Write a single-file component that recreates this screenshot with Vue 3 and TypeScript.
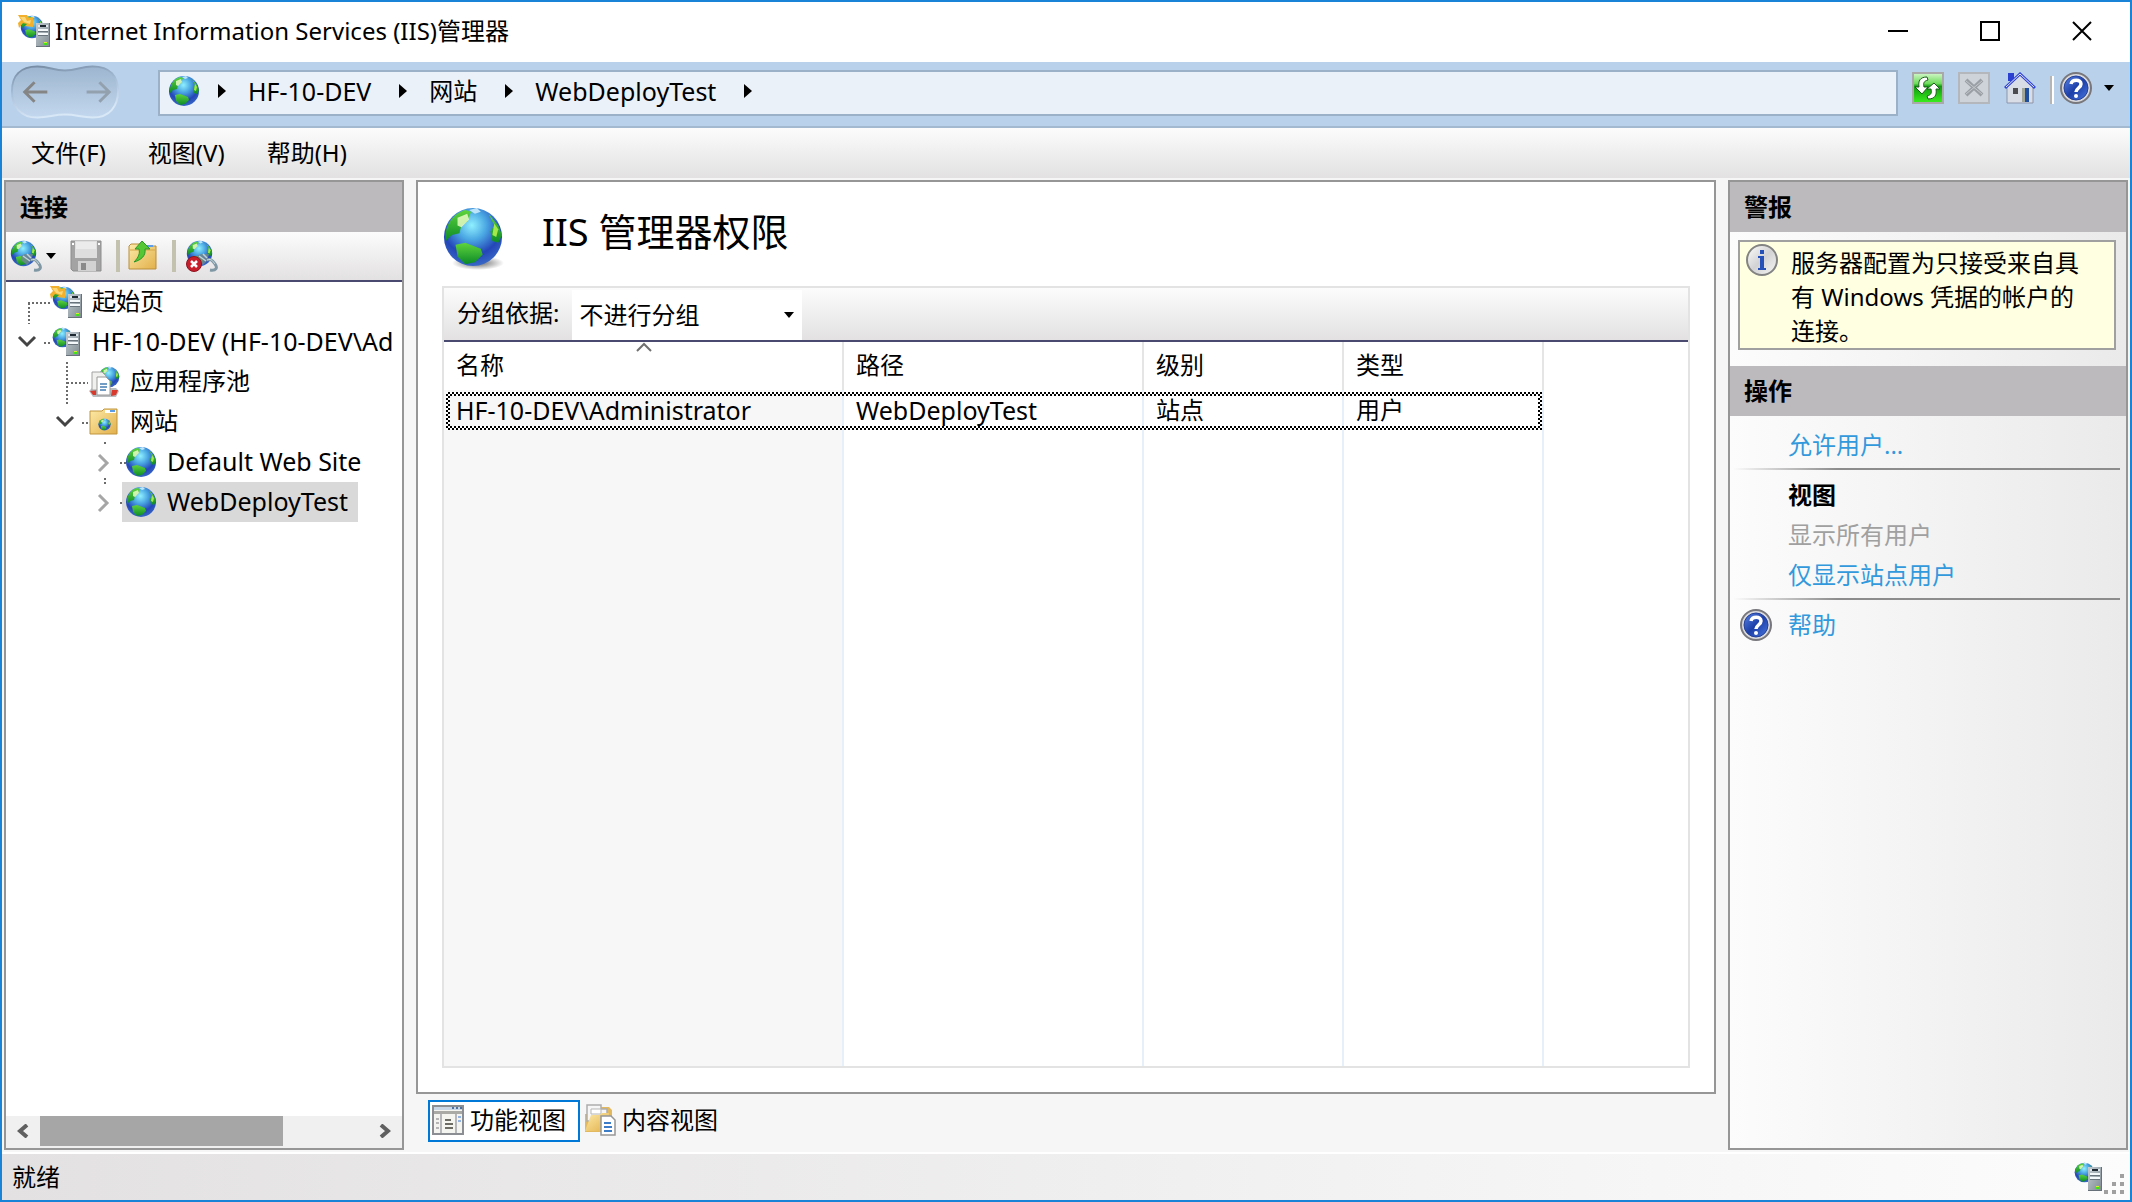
<script setup lang="ts">
import { ref } from 'vue'

interface TreeNode {
  id: string
  label: string
  icon: string
  level: number
  chevron?: { d: string; tone: string }
  dots: string[]
}

const menus = ['文件(F)', '视图(V)', '帮助(H)']
const crumbs = [
  { text: 'HF-10-DEV', latin: true },
  { text: '网站', latin: false },
  { text: 'WebDeployTest', latin: true },
]

const nodes: TreeNode[] = [
  { id: 'start', label: '起始页', icon: 'i-start', level: 0, dots: ['M22 21H44', 'M23 21V42'] },
  { id: 'server', label: 'HF-10-DEV (HF-10-DEV\\Ad', icon: 'i-server', level: 0, chevron: { d: 'M13 15l8 8 8-8', tone: '#444' }, dots: ['M38 21H44'] },
  { id: 'pools', label: '应用程序池', icon: 'i-pool', level: 1, dots: ['M61 0V40', 'M61 21H82'] },
  { id: 'sites', label: '网站', icon: 'i-sites', level: 1, chevron: { d: 'M51 15l8 8 8-8', tone: '#444' }, dots: ['M61 0V4', 'M76 21H82'] },
  { id: 'default', label: 'Default Web Site', icon: 'i-globe', level: 2, chevron: { d: 'M93 13l8 8-8 8', tone: '#a6a6a6' }, dots: ['M99 0V4', 'M99 36V40', 'M114 21H120'] },
  { id: 'deploy', label: 'WebDeployTest', icon: 'i-globe', level: 2, chevron: { d: 'M93 13l8 8-8 8', tone: '#a6a6a6' }, dots: ['M99 0V4', 'M114 21H120'] },
]
const selected = ref('deploy')

const columns = ['名称', '路径', '级别', '类型']
const rows = [['HF-10-DEV\\Administrator', 'WebDeployTest', '站点', '用户']]
const grouping = ref('none')
const view = ref('features')
const isLatin = (s: string) => /^[\x20-\x7e]+$/.test(s)
</script>

<template>
  <svg class="defs" aria-hidden="true">
    <defs>
      <radialGradient id="g-sea" cx="0.48" cy="0.3" r="0.72">
        <stop offset="0" stop-color="#8ff0ff" />
        <stop offset="0.35" stop-color="#4aa6e2" />
        <stop offset="0.7" stop-color="#2446b8" />
        <stop offset="1" stop-color="#3a6cc8" />
      </radialGradient>
      <linearGradient id="g-land" x1="0" y1="0" x2="0" y2="1">
        <stop offset="0" stop-color="#5fd43c" />
        <stop offset="1" stop-color="#0c8a28" />
      </linearGradient>
      <linearGradient id="g-case" x1="0" y1="0" x2="1" y2="1">
        <stop offset="0" stop-color="#c3ccd2" />
        <stop offset="1" stop-color="#7d8890" />
      </linearGradient>
      <linearGradient id="g-folder" x1="0" y1="0" x2="1" y2="1">
        <stop offset="0" stop-color="#fdeaa8" />
        <stop offset="1" stop-color="#e2b04a" />
      </linearGradient>
      <linearGradient id="g-refresh" x1="0" y1="0" x2="0" y2="1">
        <stop offset="0" stop-color="#d4f7cc" />
        <stop offset="0.35" stop-color="#6edc5c" />
        <stop offset="0.45" stop-color="#0f9a10" />
        <stop offset="1" stop-color="#3cf020" />
      </linearGradient>
      <linearGradient id="g-help" x1="0" y1="0" x2="1" y2="1">
        <stop offset="0" stop-color="#5b85e6" />
        <stop offset="0.5" stop-color="#1c3fa8" />
        <stop offset="1" stop-color="#4a78e0" />
      </linearGradient>
      <linearGradient id="g-info" x1="0" y1="0" x2="1" y2="1">
        <stop offset="0" stop-color="#ffffff" />
        <stop offset="0.5" stop-color="#d2d2d4" />
        <stop offset="1" stop-color="#f8f8f8" />
      </linearGradient>
      <linearGradient id="g-nav" x1="0" y1="0" x2="0" y2="1">
        <stop offset="0" stop-color="#9db5cf" />
        <stop offset="1" stop-color="#c3d8ee" />
      </linearGradient>
      <linearGradient id="g-navline" x1="0" y1="0" x2="0.3" y2="1">
        <stop offset="0" stop-color="#71869f" />
        <stop offset="0.5" stop-color="#a9c0da" />
        <stop offset="1" stop-color="#d9e8f7" />
      </linearGradient>
      <radialGradient id="g-shade">
        <stop offset="0" stop-color="#000" stop-opacity="0.6" />
        <stop offset="1" stop-color="#000" stop-opacity="0" />
      </radialGradient>
      <symbol id="i-globe" viewBox="0 0 32 32">
        <circle cx="16" cy="16" r="15" fill="url(#g-sea)" />
        <path d="M2 18C1 11 5 4 12 2l3 1-2 5-3 2-1 4-4 1z" fill="url(#g-land)" />
        <path d="M8 6l5-2 1 3-4 4-2-1z" fill="#e9fbc4" opacity="0.85" />
        <path d="M24 4l5 6 2 5-2 4-3-1-1-5 2-3z" fill="url(#g-land)" />
        <path d="M27 9l2 3-1 4-2-1z" fill="#a4e84c" />
        <path d="M7 20l5-1 8 3 1 3-4 4-5 1-4-4z" fill="url(#g-land)" />
        <path d="M14 2l4-1 2 2-3 1z" fill="#d8f4ff" opacity="0.8" />
      </symbol>
      <symbol id="i-case" viewBox="0 0 14 24">
        <path d="M0 0H14V24H0z" fill="url(#g-case)" />
        <path d="M13 0H14V24H0V23H13z" fill="#66717a" />
        <path d="M2 2H12V4H2z" fill="#dfe7ec" />
        <path d="M4 2h6v2H4z" fill="#1d2830" />
        <path d="M2 6H12V8H2zM2 10H12V12H2z" fill="#f4f8fa" />
        <path d="M2 8H12V9H2zM2 12H12V13H2z" fill="#68737c" />
        <path d="M8 19h4v3H8z" fill="#44e01a" />
        <path d="M8 19h3v1H8z" fill="#d8ee30" />
      </symbol>
      <symbol id="i-server" viewBox="0 0 32 32">
        <use href="#i-globe" x="2" y="1" width="21" height="21" />
        <use href="#i-case" x="16" y="4" width="14" height="28" preserveAspectRatio="none" />
      </symbol>
      <symbol id="i-start" viewBox="0 0 32 32">
        <use href="#i-globe" x="2" y="0" width="24" height="24" />
        <path d="M0 0H9l2 3 4-1v10l-8-1 2-2-4-1-4 5-1-5 3-3z" fill="#f2b02c" />
        <path d="M2 2h5l2 4 4-1-1 4-6-2z" fill="#fbd877" />
        <use href="#i-case" x="18" y="8" width="14" height="24" preserveAspectRatio="none" />
      </symbol>
      <symbol id="i-plug" viewBox="0 0 32 32">
        <use href="#i-globe" x="0" y="0" width="27" height="27" />
        <path d="M11 16l4-2 8 0-2 7-4 4-5-4z" fill="#6f8790" opacity="0.85" />
        <path d="M13 16l7 5M17 14l4 4" stroke="#c2d2d8" stroke-width="1.500" />
        <path d="M21 20c5-2 6 2 8 4 3 4 1 7-5 6" fill="none" stroke="#7f98a4" stroke-width="3" />
        <path d="M21 20c5-2 6 2 8 4" fill="none" stroke="#cbdde4" stroke-width="1" />
      </symbol>
      <symbol id="i-unplug" viewBox="0 0 32 32">
        <use href="#i-plug" width="32" height="32" />
        <circle cx="8" cy="24" r="7.500" fill="#c81e2c" stroke="#8f1420" />
        <path d="M5 21l6 6M11 21l-6 6" stroke="#fff" stroke-width="2.500" />
      </symbol>
      <symbol id="i-save" viewBox="0 0 32 32">
        <path d="M1 1H31V31H3l-2-2z" fill="#a3a3a3" stroke="#8e8e8e" />
        <path d="M5 1H27V18H5z" fill="#dedede" />
        <path d="M6 2H26V9H6z" fill="#ebebeb" />
        <path d="M8 21H26V31H8z" fill="#d2d2d2" />
        <path d="M11 23h5v7h-5z" fill="#8a8a8a" />
        <path d="M2 3h2v2H2zM28 3h2v2h-2z" fill="#fff" />
      </symbol>
      <symbol id="i-up" viewBox="0 0 32 32">
        <path d="M3 6l2-2h13l2 2h10v23H3z" fill="url(#g-folder)" stroke="#b98e3a" />
        <path d="M4 10H29" stroke="#d4a548" />
        <path d="M21 5h6v2h-6z" fill="#5f9de6" />
        <path d="M16 1l8 8h-5c1 7-4 11-11 13 5-5 6-9 5-13H9z" fill="#55c634" stroke="#2c962a" />
      </symbol>
      <symbol id="i-pool" viewBox="0 0 32 32">
        <use href="#i-globe" x="10" y="0" width="22" height="22" />
        <path d="M1 25l3-3h24l3 3-3 6H5z" fill="#b9bdc0" />
        <path d="M2 25l6-1v5H5zM24 24l6 0-2 5-5 1z" fill="#d8392c" />
        <path d="M4 6H14l4 4V24H4z" fill="#f0f0ee" stroke="#a2a2a2" />
        <path d="M9 11H18l4 4V29H9z" fill="#fff" stroke="#999" />
        <path d="M12 18h7M12 21h7M12 24h6" stroke="#477db4" stroke-width="1.500" />
      </symbol>
      <symbol id="i-sites" viewBox="0 0 32 32">
        <path d="M2 5h12l2-2h13v25H2z" fill="url(#g-folder)" stroke="#c0953e" />
        <path d="M17 4h11v3H17z" fill="#fff" />
        <path d="M22 4h5v2h-5z" fill="#5c9ce4" />
        <use href="#i-globe" x="10" y="12" width="13" height="13" />
      </symbol>
      <symbol id="i-help" viewBox="0 0 32 32">
        <circle cx="16" cy="16" r="15" fill="#d9d9dc" stroke="#77777c" stroke-width="2" />
        <circle cx="16" cy="16" r="12" fill="url(#g-help)" stroke="#24409a" />
        <path d="M11 12c1-5 10-5 10 0 0 4-5 4-5 8" fill="none" stroke="#fff" stroke-width="3.500" />
        <circle cx="16" cy="24" r="2" fill="#fff" />
      </symbol>
      <symbol id="i-info" viewBox="0 0 32 32">
        <circle cx="16" cy="16" r="15" fill="url(#g-info)" stroke="#838383" stroke-width="2" />
        <path d="M14 6h4v4h-4zM12 12h6v12h2v2h-8v-2h2v-10h-2z" fill="#2450b8" />
      </symbol>
      <symbol id="i-features" viewBox="0 0 32 32">
        <path d="M1 2H31V30H1z" fill="#f4f4f0" stroke="#8b8f94" stroke-width="2" />
        <path d="M2 3H30V6H2z" fill="#c9d6e6" />
        <path d="M20 3h2v2h-2zM24 3h2v2h-2zM28 3h2v2h-2z" fill="#51719e" />
        <path d="M2 7H30V10H2z" fill="#a9a9a6" />
        <path d="M9 10V29M24 10V29" stroke="#a0a4a8" stroke-width="1.500" />
        <path d="M13 16h6M13 20h8M13 24h8" stroke="#6d6d66" stroke-width="2" />
        <path d="M4 15h3M4 19h3M4 24h3" stroke="#b5b5b5" stroke-width="2" />
        <path d="M26 13h3M26 17h3" stroke="#93b3e0" stroke-width="2" />
      </symbol>
      <symbol id="i-content" viewBox="0 0 32 32">
        <path d="M13 3h12l3 3v22H1V10h6z" fill="#e2b95e" />
        <path d="M3 1h14v4h6v12H3z" fill="#f6f6f6" stroke="#adadad" stroke-width="1.500" />
        <path d="M7 5h10v5H7z" fill="#fff" stroke="#b5b5b5" />
        <path d="M7 11h8l3-2h7v18H1z" fill="url(#g-folder)" />
        <path d="M17 12h10l4 4v15H17z" fill="#fff" stroke="#979797" stroke-width="1.500" />
        <path d="M20 19h7M20 23h8M20 27h8" stroke="#3d7dc8" stroke-width="2" />
      </symbol>
    </defs>
  </svg>

  <div class="window">
    <header class="titlebar">
      <svg class="icon"><use href="#i-start" /></svg>
      <h1>Internet Information Services (IIS)管理器</h1>
      <div class="caption">
        <button aria-label="最小化"><svg viewBox="0 0 20 20"><path d="M0 10H20" /></svg></button>
        <button aria-label="最大化"><svg viewBox="0 0 20 20"><path d="M1 1H19V19H1z" /></svg></button>
        <button aria-label="关闭"><svg viewBox="0 0 20 20"><path d="M1 1L19 19M19 1L1 19" /></svg></button>
      </div>
    </header>

    <nav class="address">
      <svg class="travel" viewBox="0 0 112 56">
        <path d="M28 2C40 2 44 6 56 6S72 2 84 2C102 2 110 12 110 27S102 54 84 54C72 54 68 51 56 51S40 54 28 54C10 54 2 42 2 27S10 2 28 2z" fill="url(#g-nav)" stroke="url(#g-navline)" stroke-width="2" />
        <path d="M38 28H15M25 18L15 28l10 10" fill="none" stroke="#858585" stroke-width="3" />
        <path d="M78 28h23M91 18l10 10-10 10" fill="none" stroke="#93a0ae" stroke-width="3" />
      </svg>
      <div class="path">
        <svg class="icon"><use href="#i-globe" /></svg>
        <svg class="arrow" viewBox="0 0 8 14"><path d="M0 0L8 7 0 14z" /></svg>
        <template v-for="c in crumbs" :key="c.text">
          <button :class="{ latin: c.latin }">{{ c.text }}</button>
          <svg class="arrow" viewBox="0 0 8 14"><path d="M0 0L8 7 0 14z" /></svg>
        </template>
      </div>
      <div class="tools">
        <button aria-label="刷新">
          <svg class="icon" viewBox="0 0 32 32">
            <path d="M1 1H31V31H1z" fill="url(#g-refresh)" stroke="#a9a9a9" stroke-width="2" />
            <path d="M15 5c-7 0-9 4-8 10H3l7 7 6-7h-4c-1-4 0-6 4-7z" fill="#fff" stroke="#1c5c1c" />
            <path d="M16 27c7 0 9-4 8-10h4l-6-6-7 6h4c1 4 0 6-4 7z" fill="#fff" stroke="#1c5c1c" />
          </svg>
        </button>
        <button aria-label="停止" disabled>
          <svg class="icon" viewBox="0 0 32 32">
            <path d="M1 1H31V31H1z" fill="#cdd3d9" stroke="#b4b8bd" stroke-width="2" />
            <path d="M8 8l16 15M24 8L8 23" stroke="#9a9fa5" stroke-width="4" />
            <path d="M8 9l16 13M24 9L8 22" stroke="#c3c7cc" stroke-width="1" />
          </svg>
        </button>
        <button aria-label="主页">
          <svg class="icon" viewBox="0 0 32 32">
            <path d="M4 1h6v8H4z" fill="#2b3fd0" />
            <path d="M3 15L16 3l13 12v16H3z" fill="#d9dde6" stroke="#8d95ab" />
            <path d="M9 16h5v6H9z" fill="#4c4c50" />
            <path d="M18 16h7v14h-7z" fill="#1e4e9c" />
            <path d="M18 16h3v14h-3z" fill="#a3a79a" />
            <path d="M1 16L16 2l15 14" fill="none" stroke="#3346d2" stroke-width="3" />
            <path d="M2 15L16 2l14 13" fill="none" stroke="#dfe4ff" stroke-width="1" />
          </svg>
        </button>
        <i class="bar"></i>
        <button class="help" aria-label="帮助">
          <svg class="icon"><use href="#i-help" /></svg>
          <svg class="caret" viewBox="0 0 10 6"><path d="M0 0H10L5 6z" /></svg>
        </button>
      </div>
    </nav>

    <div class="menubar">
      <button v-for="m in menus" :key="m">{{ m }}</button>
    </div>

    <main class="body">
      <aside class="panel left">
        <h2>连接</h2>
        <div class="toolbar">
          <button class="connect" aria-label="连接">
            <svg class="icon"><use href="#i-plug" /></svg>
            <svg class="caret" viewBox="0 0 10 6"><path d="M0 0H10L5 6z" /></svg>
          </button>
          <button aria-label="保存" disabled><svg class="icon"><use href="#i-save" /></svg></button>
          <i class="bar"></i>
          <button aria-label="上移"><svg class="icon"><use href="#i-up" /></svg></button>
          <i class="bar wide"></i>
          <button aria-label="断开"><svg class="icon"><use href="#i-unplug" /></svg></button>
        </div>
        <ul class="tree">
          <li v-for="n in nodes" :key="n.id">
            <svg :class="['gutter', 'level-' + n.level]">
              <path v-for="d in n.dots" :key="d" :d="d" class="dots" />
              <path v-if="n.chevron" :d="n.chevron.d" fill="none" :stroke="n.chevron.tone" stroke-width="3" />
            </svg>
            <button :class="{ selected: selected === n.id, latin: isLatin(n.label) }" @click="selected = n.id">
              <svg class="icon"><use :href="'#' + n.icon" /></svg>
              <span>{{ n.label }}</span>
            </button>
          </li>
        </ul>
        <div class="scroll">
          <button aria-label="向左"><svg viewBox="0 0 12 14"><path d="M10 1L3 7l7 6" /></svg></button>
          <div class="track"><div class="thumb"></div></div>
          <button aria-label="向右"><svg viewBox="0 0 12 14"><path d="M2 1l7 6-7 6" /></svg></button>
        </div>
      </aside>

      <section class="centre">
        <div class="panel page">
          <div class="heading">
            <svg viewBox="0 0 64 64">
              <ellipse cx="36" cy="57" rx="26" ry="7" fill="url(#g-shade)" />
              <use href="#i-globe" x="0" y="0" width="62" height="62" />
            </svg>
            <h2>IIS 管理器权限</h2>
          </div>
          <div class="list">
            <div class="group">
              <label for="grouping">分组依据:</label>
              <div class="combo">
                <select id="grouping" v-model="grouping">
                  <option value="none">不进行分组</option>
                  <option value="type">类型</option>
                </select>
                <svg class="caret" viewBox="0 0 10 6"><path d="M0 0H10L5 6z" /></svg>
              </div>
            </div>
            <div class="grid">
              <table>
                <colgroup><col class="c1" /><col class="c2" /><col class="c3" /><col class="c3" /><col /></colgroup>
                <thead>
                  <tr>
                    <th v-for="(c, i) in columns" :key="c">
                      {{ c }}
                      <svg v-if="i === 0" class="sort" viewBox="0 0 16 10"><path d="M1 9l7-7 7 7" /></svg>
                    </th>
                    <th></th>
                  </tr>
                </thead>
                <tbody>
                  <tr v-for="r in rows" :key="r[0]" class="focused">
                    <td v-for="c in r" :key="c" :class="{ latin: isLatin(c) }">{{ c }}</td>
                    <td></td>
                  </tr>
                  <tr class="rest"><td v-for="n in 5" :key="n"></td></tr>
                </tbody>
              </table>
            </div>
          </div>
        </div>
        <div class="tabs">
          <button :class="{ on: view === 'features' }" @click="view = 'features'">
            <svg class="icon"><use href="#i-features" /></svg>功能视图
          </button>
          <button :class="{ on: view === 'content' }" @click="view = 'content'">
            <svg class="icon"><use href="#i-content" /></svg>内容视图
          </button>
        </div>
      </section>

      <aside class="panel right">
        <h2>警报</h2>
        <div class="alert">
          <svg class="icon"><use href="#i-info" /></svg>
          <p>服务器配置为只接受来自具有 Windows 凭据的帐户的连接。</p>
        </div>
        <h2>操作</h2>
        <div class="actions">
          <div class="set"><a href="#">允许用户...</a></div>
          <div class="set">
            <h3>视图</h3>
            <span class="off">显示所有用户</span>
            <a href="#">仅显示站点用户</a>
          </div>
          <div class="set">
            <a href="#" class="with-icon"><svg class="icon"><use href="#i-help" /></svg>帮助</a>
          </div>
        </div>
      </aside>
    </main>

    <footer class="status">
      <span>就绪</span>
      <svg class="icon"><use href="#i-server" /></svg>
      <svg class="grip" viewBox="0 0 20 20">
        <path d="M16 0h4v4h-4zM8 8h4v4H8zM16 8h4v4h-4zM0 16h4v4H0zM8 16h4v4H8zM16 16h4v4h-4z" />
      </svg>
    </footer>
  </div>
</template>

<style>
body {
  margin: 0;
}
</style>

<style scoped>
*,
*::after {
  box-sizing: border-box;
}
.defs {
  position: absolute;
  width: 0;
  height: 0;
}
.window {
  display: flex;
  flex-direction: column;
  height: 100vh;
  border: 2px solid #1883d7;
  background: #f6f6f6;
  color: #000;
  font-family: 'Noto Sans', 'Noto Sans CJK SC', sans-serif;
  font-size: 24px;
  line-height: 34px;
}
.latin {
  font-size: 25px;
}
button {
  display: flex;
  align-items: center;
  margin: 0;
  padding: 0;
  border: 0;
  background: none;
  color: inherit;
  font-family: inherit;
  font-size: 24px;
  line-height: 34px;
  white-space: nowrap;
}
button.latin {
  font-size: 25px;
}
svg {
  display: block;
  flex: none;
}
.icon {
  width: 32px;
  height: 32px;
}
.caret {
  width: 10px;
  height: 6px;
}
h1,
h2,
h3,
p {
  margin: 0;
  font-weight: 400;
}

.titlebar {
  display: flex;
  align-items: center;
  height: 60px;
  padding: 0 2px 2px 16px;
  background: #fff;
}
.titlebar h1 {
  flex: 1;
  padding-left: 5px;
  font-size: 24px;
}
.caption {
  display: flex;
}
.caption button {
  width: 92px;
  height: 58px;
  justify-content: center;
}
.caption svg {
  width: 20px;
  height: 20px;
}
.caption path {
  fill: none;
  stroke: #000;
  stroke-width: 2;
}

.address {
  display: flex;
  height: 66px;
  padding: 2px 16px 0 8px;
  border-bottom: 2px solid #a3b9d0;
  background: #b9d1ea;
}
.travel {
  width: 110px;
  height: 56px;
}
.path {
  display: flex;
  flex: 1;
  align-items: center;
  height: 46px;
  margin: 6px 14px 0 38px;
  padding: 0 0 4px 8px;
  border: 2px solid #9bb1c8;
  background: #eaf1f9;
}
.arrow {
  width: 8px;
  height: 14px;
  margin: 0 22px 0 28px;
}
.path .icon + .arrow {
  margin-left: 18px;
}
.tools {
  display: flex;
  gap: 14px;
  padding-top: 8px;
}
.tools button {
  height: 32px;
}
.tools .bar {
  width: 4px;
  height: 28px;
  margin: 4px -8px 0 0;
  border-left: 2px solid #b5b5b5;
  border-right: 2px solid #fff;
}
.help {
  gap: 12px;
}

.menubar {
  display: flex;
  gap: 42px;
  height: 50px;
  padding: 0 29px;
  background: linear-gradient(#fcfcfc, #e3e1e2);
}

.body {
  display: flex;
  flex: 1;
  gap: 12px;
  min-height: 0;
  padding: 2px;
}
.panel {
  display: flex;
  flex-direction: column;
  border: 2px solid #969696;
}
.left,
.right {
  flex: none;
  width: 400px;
}
.left {
  background: #fff;
}
.left > h2,
.right > h2 {
  height: 50px;
  padding-left: 14px;
  background: #bdbabd;
  font-size: 24px;
  font-weight: 700;
  line-height: 50px;
}
.toolbar {
  display: flex;
  align-items: center;
  gap: 14px;
  height: 50px;
  padding-left: 4px;
  border-bottom: 2px solid #4a4a70;
  background: linear-gradient(#fcfcfc, #e3e1e2);
}
.toolbar .bar {
  width: 4px;
  height: 32px;
  margin-right: -8px;
  background: #c3c2ae;
}
.toolbar .wide {
  margin-right: -4px;
}
.connect {
  gap: 4px;
}
.tree {
  flex: 1;
  min-height: 0;
  margin: 0;
  padding: 0;
  overflow: hidden;
  list-style: none;
}
.tree li {
  display: flex;
}
.gutter {
  height: 40px;
  overflow: visible;
}
.level-0 {
  width: 41px;
}
.level-1 {
  width: 79px;
}
.level-2 {
  width: 116px;
}
.dots {
  fill: none;
  stroke: #6b6b6b;
  stroke-width: 2;
  stroke-dasharray: 2 2;
}
.tree button {
  gap: 10px;
  height: 40px;
  padding: 0 10px 0 3px;
}
.tree button > span {
  padding-bottom: 2px;
}
.tree .selected {
  background: #d9d9d9;
}
.scroll {
  display: flex;
  height: 32px;
  background: #f0f0f0;
}
.scroll button {
  width: 34px;
  height: 30px;
  justify-content: center;
}
.scroll svg {
  width: 12px;
  height: 14px;
}
.scroll path {
  fill: none;
  stroke: #606060;
  stroke-width: 4;
}
.track {
  flex: 1;
}
.thumb {
  width: 74%;
  height: 30px;
  background: #a6a6a6;
}

.centre {
  display: flex;
  flex: 1;
  flex-direction: column;
  min-width: 0;
}
.page {
  flex: 1;
  min-height: 0;
  padding: 24px;
  background: #fff;
}
.heading {
  display: flex;
  height: 80px;
}
.heading svg {
  width: 64px;
  height: 64px;
}
.heading h2 {
  padding-left: 36px;
  font-size: 38px;
  line-height: 50px;
}
.list {
  display: flex;
  flex: 1;
  flex-direction: column;
  min-height: 0;
  border: 2px solid #e3e3e3;
}
.group {
  display: flex;
  align-items: center;
  height: 54px;
  padding-left: 13px;
  border-bottom: 2px solid #4a4a70;
  background: linear-gradient(#fcfcfc, #e3e1e2);
}
.group label {
  padding-bottom: 2px;
}
.combo {
  display: grid;
  align-items: center;
  width: 230px;
  height: 50px;
  margin: 2px 0 0 13px;
  background: #fff;
}
.combo > * {
  grid-area: 1 / 1;
}
.combo .caret {
  justify-self: end;
  margin-right: 8px;
  pointer-events: none;
}
select {
  width: 100%;
  height: 50px;
  padding: 0 7px 2px;
  border: 0;
  background: #fff;
  color: #000;
  font-family: inherit;
  font-size: 24px;
  appearance: none;
}
.grid {
  flex: 1;
  min-height: 0;
}
table {
  width: 100%;
  height: 100%;
  border-collapse: separate;
  border-spacing: 0;
  table-layout: fixed;
}
.c1 {
  width: 400px;
}
.c2 {
  width: 300px;
}
.c3 {
  width: 200px;
}
th,
td {
  padding: 0 0 2px 12px;
  text-align: left;
  font-weight: 400;
  white-space: nowrap;
}
th {
  position: relative;
  height: 48px;
  border-right: 2px solid #e5e5e5;
}
td {
  border-right: 2px solid #e6f0fa;
}
th:last-child,
td:last-child {
  border-right: 0;
}
td:first-child {
  background: #f7f7f7;
}
.sort {
  position: absolute;
  top: 0;
  left: calc(50% - 7px);
  width: 16px;
  height: 10px;
}
.sort path {
  fill: none;
  stroke: #707070;
  stroke-width: 2;
}
.focused {
  position: relative;
}
.focused td {
  height: 42px;
}
.rest td {
  height: 100%;
}
.focused::after {
  content: '';
  position: absolute;
  top: 2px;
  left: 2px;
  width: 1096px;
  height: 38px;
  border: 4px solid transparent;
  background: conic-gradient(#000 25%, #fff 0 50%, #000 0 75%, #fff 0) 0 0 / 4px 4px border-box;
  mask: linear-gradient(#000 0 0) padding-box exclude, linear-gradient(#000 0 0);
  pointer-events: none;
}

.tabs {
  display: flex;
  height: 56px;
  padding: 6px 12px 8px;
}
.tabs button {
  gap: 6px;
  height: 42px;
  padding: 0 12px 2px 2px;
  border: 2px solid transparent;
}
.tabs .on {
  border-color: #0078d7;
  background: #fff;
}

.right {
  background: linear-gradient(90deg, #fcfcfc, #eaeaea);
}
.alert {
  display: flex;
  gap: 13px;
  height: 110px;
  margin: 8px 10px 16px 8px;
  padding: 2px 6px;
  border: 2px solid #a0a0a0;
  background: #ffffe1;
}
.alert p {
  flex: 1;
  padding: 2px 18px 0 0;
}
.actions {
  padding: 0 6px 0 4px;
}
.set {
  display: flex;
  flex-direction: column;
  padding: 5px 0 3px 54px;
  line-height: 40px;
}
.set + .set {
  border-top: 2px solid;
  border-image: linear-gradient(90deg, transparent, #8c8c8c 27%) 1;
}
.set:first-child {
  padding-top: 9px;
}
a {
  color: #3399dd;
  text-decoration: none;
}
h3 {
  font-size: 24px;
  font-weight: 700;
}
.off {
  color: #a0a0a0;
}
.with-icon {
  display: flex;
  align-items: center;
  gap: 16px;
  margin-left: -48px;
}

.status {
  display: flex;
  align-items: center;
  height: 48px;
  padding: 0 6px 0 10px;
  border-top: 2px solid #fff;
  background: linear-gradient(90deg, #e3e1e2, #fcfcfc);
}
.status span {
  flex: 1;
}
.grip {
  width: 20px;
  height: 20px;
  margin-top: 14px;
  fill: #a0a0a0;
}
</style>
